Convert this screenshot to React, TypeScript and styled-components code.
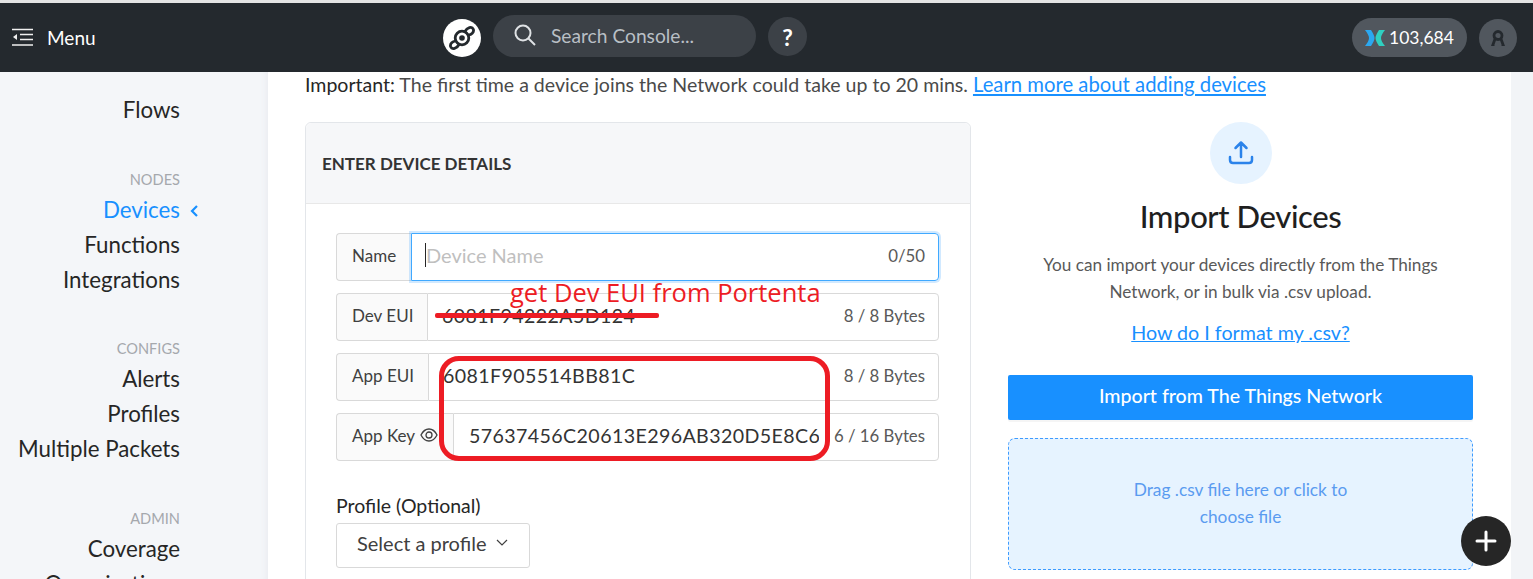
import React from "react";
import styled, { createGlobalStyle } from "styled-components";

const Global = createGlobalStyle`
  html, body { margin: 0; padding: 0; background: #fff; }
  body { font-family: "Lato", "Open Sans", Arial, sans-serif; color: #262626; }
  * { box-sizing: border-box; }
`;
const Page = styled.div`
  position: relative; width: 1533px; height: 579px; overflow: hidden;
  display: flex; flex-direction: column; background: #fff;
`;
const TopStrip = styled.div`height: 3px; background: #e4e4e4; flex: none;`;
const Header = styled.header`
  height: 69px; flex: none; background: #24292e; display: flex; align-items: center;
  padding: 0 16px 0 12px;
`;
const MenuGroup = styled.div`
  width: 431px; display: flex; align-items: center; gap: 14px; color: #fff; font-size: 19px;
`;
const LogoCircle = styled.div`
  width: 38px; height: 38px; border-radius: 50%; background: #fff; display: flex;
  align-items: center; justify-content: center; margin-right: 12px; flex: none;
`;
const SearchPill = styled.div`
  width: 263px; height: 42px; border-radius: 21px; background: #3c4147; display: flex; margin-bottom: 3px;
  align-items: center; gap: 15px; padding: 0 0 2px 21px; color: #b9bfc5; font-size: 19.2px; flex: none;
`;
const HelpCircle = styled.div`
  width: 39px; height: 39px; border-radius: 50%; background: #3c4147; margin: 0 0 2px 12px;
  display: flex; align-items: center; justify-content: center; color: #fff; font-weight: 700; font-size: 23px; flex: none;
`;
const HeaderRight = styled.div`margin-left: auto; display: flex; align-items: center; gap: 12px;`;
const BalancePill = styled.div`
  width: 115px; height: 39px; border-radius: 20px; background: #51575e; display: flex; align-items: center;
  gap: 4px; padding-left: 13px; color: #fff; font-size: 17.5px;
`;
const Avatar = styled.div`
  width: 38px; height: 38px; border-radius: 50%; background: #51575e; display: flex; align-items: center; justify-content: center;
`;
const Body = styled.div`flex: 1; display: flex; min-height: 0;`;
const Sidebar = styled.aside`
  width: 268px; flex: none; background: #f4f6f9; box-shadow: inset -8px 0 8px -8px #e4e7ec;
  padding: 20px 88px 0 0; display: flex; flex-direction: column; align-items: flex-end;
`;
const NavItem = styled.div<{ $active?: boolean }>`
  position: relative; height: 35px; line-height: 35px; font-size: 22.3px; white-space: nowrap; flex: none;
  color: ${p => (p.$active ? "#1890ff" : "#262626")};
`;
const NavChevron = styled.span`position: absolute; left: calc(100% + 9px); top: 12px; display: flex;`;
const NavLabel = styled.div`
  height: 20px; line-height: 20px; margin-top: 42.5px; margin-bottom: 2px; flex: none;
  font-size: 14.6px; color: #a5a8ad; text-transform: uppercase;
`;
const Main = styled.main`flex: 1; padding: 0 38px 0 37px; background: #fff; min-width: 0;`;
const Gutter = styled.div`width: 22px; flex: none; background: #f2f4f7;`;
const Notice = styled.p`
  margin: 0; height: 50px; line-height: 24px; font-size: 19.56px; color: #4a4a4a; white-space: nowrap;
  strong { font-weight: 400; color: #262626; }
  a { color: #1890ff; text-decoration: underline; font-size: 20.3px; }
`;
const Columns = styled.div`display: flex; gap: 37px;`;
const Card = styled.section`
  width: 666px; flex: none; height: 500px; border: 1px solid #e3e6ea; border-radius: 6px 6px 0 0;
`;
const CardHead = styled.div`
  height: 81px; background: #f6f7f9; border-bottom: 1px solid #e8e8e8; display: flex; align-items: center;
  padding: 1px 0 0 16px; font-size: 17px; font-weight: 700; color: #333;
  border-radius: 6px 6px 0 0;
`;
const CardBody = styled.div`padding: 29px 31px 0 30px; display: flex; flex-direction: column; gap: 12px;`;
const Field = styled.div`
  height: 48px; display: flex; align-items: stretch; font-size: 18px; flex: none;
`;
const Addon = styled.div<{ $w: number }>`
  width: ${p => p.$w}px; flex: none; display: flex; align-items: center; gap: 5px; padding: 0 0 4px 15px;
  background: #fafafa; border: 1px solid #d9d9d9; border-right: 0; border-radius: 4px 0 0 4px;
  font-size: 17px; color: #404040; white-space: nowrap;
`;
const Control = styled.div<{ $focus?: boolean; $pad?: number }>`
  flex: 1; display: flex; align-items: center; justify-content: space-between; min-width: 0;
  padding: 0 13px 4px ${p => p.$pad ?? 14}px;
  border: 1px solid ${p => (p.$focus ? "#40a9ff" : "#d9d9d9")}; border-radius: 0 4px 4px 0;
  box-shadow: ${p => (p.$focus ? "0 0 0 2px rgba(24,144,255,.2)" : "none")};
  position: relative;
`;
const Value = styled.span<{ $clip?: number }>`
  font-size: 19.6px; letter-spacing: .4px; color: #333; white-space: nowrap; overflow: hidden;
  ${p => (p.$clip ? `width: ${p.$clip}px; flex: none;` : "")}
`;
const Placeholder = styled.span`font-size: 20px; color: #bfbfbf; border-left: 1px solid #262626; margin-left: -1px; line-height: 24px;`;
const Suffix = styled.span`font-size: 16.8px; color: #595959; white-space: nowrap;`;
const ProfileLabel = styled.div`margin-top: 21px; height: 24px; line-height: 24px; font-size: 19.5px; color: #262626;`;
const SelectBox = styled.div`
  margin-top: 5px; width: 194px; height: 45px; border: 1px solid #d9d9d9; border-radius: 3px; display: flex; align-items: center;
  gap: 10px; padding: 0 0 6px 20px; font-size: 20px; color: #404040;
`;
const ProfileGroup = styled.div``;
const ImportCol = styled.section`width: 465px; flex: none; display: flex; flex-direction: column; align-items: center;`;
const UploadCircle = styled.div`
  width: 62px; height: 62px; border-radius: 50%; background: #e6f3ff; display: flex; align-items: center; justify-content: center; flex: none;
`;
const Title = styled.h2`margin: 12px 0 0; height: 40px; line-height: 40px; font-size: 31px; font-weight: 500; color: #1f1f1f; letter-spacing: -.4px;`;
const Para = styled.p`margin: 15px 0 0; width: 420px; text-align: center; font-size: 17.2px; line-height: 27px; color: #595959;`;
const FormatLink = styled.a`margin-top: 14px; height: 27px; line-height: 27px; font-size: 19.7px; color: #1890ff; text-decoration: underline;`;
const ImportButton = styled.div`
  margin-top: 29px; width: 465px; height: 45px; padding-bottom: 5px; background: #1890ff; border-radius: 2px; color: #fff; font-size: 19.6px; font-weight: 500;
  display: flex; align-items: center; justify-content: center; box-shadow: 0 2px 0 rgba(0,0,0,.04);
`;
const DropZone = styled.div`
  margin-top: 18px; width: 465px; height: 132px; background: #e6f3ff; border: 1px dashed #3d9bff; border-radius: 7px;
  display: flex; align-items: center; justify-content: center; text-align: center;
  color: #5a9bf0; font-size: 17.3px; line-height: 27px; padding: 0 100px 2px;
`;
const Fab = styled.div`
  position: absolute; left: 1461px; top: 516px; width: 50px; height: 50px; border-radius: 50%; background: #262626;
  display: flex; align-items: center; justify-content: center;
`;
const Annotation = styled.div`
  position: absolute; left: 510px; top: 276px; font-family: "Open Sans", sans-serif; font-size: 25.5px; line-height: 32px; color: #ed1c24; white-space: nowrap;
`;
const Strike = styled.div`position: absolute; left: 435px; top: 313px; width: 224px; height: 5px; background: #ed1c24; border-radius: 2px;`;
const RedBox = styled.div`
  position: absolute; left: 439px; top: 356px; width: 391px; height: 105px; border: 5px solid #ed1c24; border-radius: 20px;
`;

const MenuIcon = () => (
  <svg width="21" height="19" viewBox="0 0 21 19" fill="none" stroke="#f0f0f0" strokeWidth="1.6">
    <path d="M0 1.500h21M8 6.500h13M8 11.500h13M0 17h21" />
    <path d="M5 6v6L1 9z" fill="#f0f0f0" stroke="none" />
  </svg>
);
const HeliumLogo = () => (
  <svg width="26" height="26" viewBox="0 0 26 26" fill="none" stroke="#24292e" strokeWidth="2.800" strokeLinecap="round">
    <circle cx="13" cy="13" r="6.800" />
    <circle cx="13" cy="13" r="2.800" fill="#24292e" stroke="none" />
    <path d="M16 6.500C18 2.500 23 1 24.300 4.200C25.500 7.500 22 9.500 19.500 10" />
    <path d="M10 19.500C8 23.500 3 25 1.700 21.800C.5 18.500 4 16.500 6.500 16" />
  </svg>
);
const SearchIcon = () => (
  <svg width="22" height="22" viewBox="0 0 22 22" fill="none" stroke="#dfe2e5" strokeWidth="2">
    <circle cx="9" cy="9" r="7.500" /><path d="M14.500 14.500L21 21" />
  </svg>
);
const DcIcon = () => (
  <svg width="20" height="16" viewBox="0 0 20 16">
    <path d="M0 0h6C8 3 9.500 6 9.500 8S8 13 6 16H0c2.500-3 4-6 4-8S2.500 3 0 0z" fill="#2ba8f0" />
    <path d="M20 0h-6c-2 3-3.500 6-3.500 8s1.500 5 3.500 8h6c-2.500-3-4-6-4-8s1.500-5 4-8z" fill="#2fd0c0" />
  </svg>
);
const UserIcon = () => (
  <svg width="14" height="16" viewBox="0 0 14 16" fill="none" stroke="#24292e" strokeWidth="2.800">
    <circle cx="7" cy="5.500" r="4" /><path d="M4 9l-2 5.500h1.500M10 9l2 5.500h-1.500" />
  </svg>
);
const Eye = () => (
  <svg width="18" height="14" viewBox="0 0 18 14" fill="none" stroke="#404040" strokeWidth="1.300">
    <path d="M1 7c2-4 5-6 8-6s6 2 8 6c-2 4-5 6-8 6s-6-2-8-6z" /><circle cx="9" cy="7" r="3" />
  </svg>
);
const Upload = () => (
  <svg width="26" height="26" viewBox="0 0 26 26" fill="none" stroke="#2b83ea" strokeWidth="2.500" strokeLinecap="round" strokeLinejoin="round">
    <path d="M13 17V3M7.500 8L13 2.500 18.500 8M2 17v3c0 2 1.500 3 3 3h16c1.500 0 3-1 3-3v-3" />
  </svg>
);

export default function App() {
  return (
    <Page>
      <Global />
      <TopStrip />
      <Header>
        <MenuGroup><MenuIcon /><span>Menu</span></MenuGroup>
        <LogoCircle><HeliumLogo /></LogoCircle>
        <SearchPill><SearchIcon /><span>Search Console...</span></SearchPill>
        <HelpCircle>?</HelpCircle>
        <HeaderRight>
          <BalancePill><DcIcon /><span>103,684</span></BalancePill>
          <Avatar><UserIcon /></Avatar>
        </HeaderRight>
      </Header>
      <Body>
        <Sidebar>
          <NavItem>Flows</NavItem>
          <NavLabel>Nodes</NavLabel>
          <NavItem $active>Devices
            <NavChevron>
              <svg width="10" height="14" viewBox="0 0 10 14" fill="none" stroke="#1890ff" strokeWidth="2.200"><path d="M8 2L3 7l5 5" /></svg>
            </NavChevron>
          </NavItem>
          <NavItem>Functions</NavItem>
          <NavItem>Integrations</NavItem>
          <NavLabel>Configs</NavLabel>
          <NavItem>Alerts</NavItem>
          <NavItem>Profiles</NavItem>
          <NavItem>Multiple Packets</NavItem>
          <NavLabel>Admin</NavLabel>
          <NavItem>Coverage</NavItem>
          <NavItem>Organizations</NavItem>
        </Sidebar>
        <Main>
          <Notice><strong>Important:</strong> The first time a device joins the Network could take up to 20 mins. <a>Learn more about adding devices</a></Notice>
          <Columns>
            <Card>
              <CardHead>ENTER DEVICE DETAILS</CardHead>
              <CardBody>
                <Field>
                  <Addon $w={75}>Name</Addon>
                  <Control $focus><Placeholder>Device Name</Placeholder><Suffix>0/50</Suffix></Control>
                </Field>
                <Field>
                  <Addon $w={91}>Dev EUI</Addon>
                  <Control><Value>6081F94222A5D124</Value><Suffix>8 / 8 Bytes</Suffix></Control>
                </Field>
                <Field>
                  <Addon $w={92}>App EUI</Addon>
                  <Control><Value>6081F905514BB81C</Value><Suffix>8 / 8 Bytes</Suffix></Control>
                </Field>
                <Field>
                  <Addon $w={117}>App Key <Eye /></Addon>
                  <Control $pad={15}><Value $clip={350}>57637456C20613E296AB320D5E8C6</Value><Suffix>6 / 16 Bytes</Suffix></Control>
                </Field>
                <ProfileGroup>
                  <ProfileLabel>Profile (Optional)</ProfileLabel>
                  <SelectBox>Select a profile
                    <svg width="12" height="8" viewBox="0 0 12 8" fill="none" stroke="#404040" strokeWidth="1.200"><path d="M1 1l5 5 5-5" /></svg>
                  </SelectBox>
                </ProfileGroup>
              </CardBody>
            </Card>
            <ImportCol>
              <UploadCircle><Upload /></UploadCircle>
              <Title>Import Devices</Title>
              <Para>You can import your devices directly from the Things Network, or in bulk via .csv upload.</Para>
              <FormatLink>How do I format my .csv?</FormatLink>
              <ImportButton>Import from The Things Network</ImportButton>
              <DropZone>Drag .csv file here or click to choose file</DropZone>
            </ImportCol>
          </Columns>
        </Main>
        <Gutter />
      </Body>
      <Annotation>get Dev EUI from Portenta</Annotation>
      <Strike />
      <RedBox />
      <Fab>
        <svg width="22" height="22" viewBox="0 0 22 22" stroke="#fff" strokeWidth="3" strokeLinecap="round"><path d="M11 2v18M2 11h18" /></svg>
      </Fab>
    </Page>
  );
}
